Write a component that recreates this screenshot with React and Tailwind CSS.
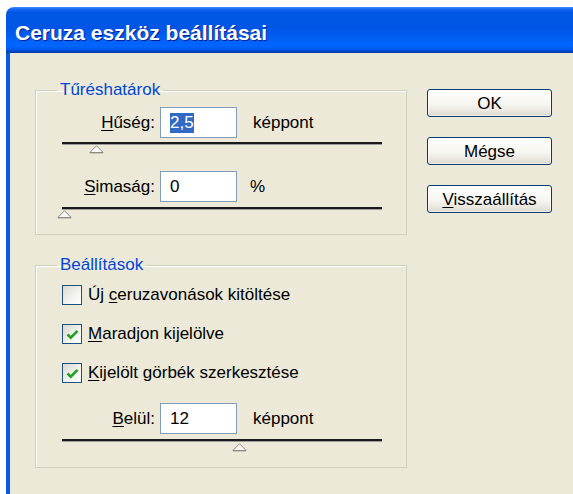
import React from "react";

// Accelerator letter, underlined like a Win32 mnemonic
const Acc = ({ children }) => (
  <span className="underline decoration-1 underline-offset-[2px]">{children}</span>
);

const Thumb = () => (
  <svg width="15" height="9" viewBox="0 0 15 9" className="block">
    <polygon points="7.5,0.8 14.2,7.5 0.8,7.5" fill="#F7F6F1" stroke="#8E8C82" strokeWidth="1" />
    <line x1="1" y1="8.5" x2="14" y2="8.5" stroke="#C9C6BA" strokeWidth="1" />
  </svg>
);

// Trackbar without ticks; `at` is the thumb offset along the track
const Track = ({ at, gap = 0 }) => (
  <div className="ml-[26px] w-[320px]">
    <div className="h-[3px] border-t-2 border-[#1A1A1A] bg-[#9C9C9C]" />
    <div style={{ marginLeft: at, marginTop: gap }} className="w-[15px]">
      <Thumb />
    </div>
  </div>
);

const ValueRow = ({ label, value, selected, unit, unitGap }) => (
  <div className="flex h-[31px] items-center">
    <div className="w-[124px] pr-[5px] text-right">{label}</div>
    <div className="flex h-[31px] w-[77px] items-center border border-[#7F9DB9] bg-white pl-[9px]">
      {selected ? (
        <span className="bg-[#316AC5] leading-[20px] text-white">{value}</span>
      ) : (
        value
      )}
    </div>
    <span className={unitGap}>{unit}</span>
  </div>
);

const CheckBox = ({ checked, children, className }) => (
  <div className={`ml-[26px] flex h-[20px] items-center ${className}`}>
    <span className="flex h-[20px] w-[20px] items-center justify-center border border-[#1C5180] bg-[linear-gradient(135deg,#D9D8D1_0%,#F4F4F0_60%,#FFFFFF_100%)]">
      {checked && (
        <svg width="13" height="11" viewBox="0 0 13 11">
          <path d="M1.5 5.5 L4.8 8.6 L11.5 1.8" fill="none" stroke="#21A121" strokeWidth="2.6" />
        </svg>
      )}
    </span>
    <span className="ml-[6px]">{children}</span>
  </div>
);

const XpButton = ({ children }) => (
  <button className="h-[28px] w-[125px] rounded-[3px] border border-[#003C74] bg-[linear-gradient(180deg,#FFFFFF_0%,#F6F5F0_55%,#E6E3D9_88%,#D6D0C5_100%)] text-[17px] leading-none text-black shadow-[inset_0_0_0_1px_rgba(255,255,255,0.6)]">
    {children}
  </button>
);

const GroupBox = ({ title, className, children }) => (
  <fieldset className={`w-[372px] border border-[#D0D0BF] shadow-[inset_1px_1px_0_#FFFFFF] ${className}`}>
    <legend className="ml-[21px] px-[3px] leading-[20px] text-[#0046D5]">{title}</legend>
    {children}
  </fieldset>
);

export default function App() {
  return (
    <div className="h-[494px] w-[573px] overflow-hidden bg-white pl-[6px] pt-[7px] font-['Liberation_Sans',Arial,sans-serif] text-[17px] text-black">
      <div className="w-[640px] overflow-hidden rounded-tl-[8px]">
        {/* caption */}
        <div className="h-[46px] bg-[linear-gradient(180deg,#3D8EFF_0%,#1266F0_5%,#0057E6_12%,#0055E4_45%,#0061F6_72%,#0066FF_84%,#005BEE_92%,#0043C6_97%,#0039A8_100%)] pl-[9px] pt-[14px]">
          <span className="text-[21px] font-bold leading-[24px] text-white [text-shadow:1px_1px_0_#0A1E8C]">
            Ceruza eszköz beállításai
          </span>
        </div>

        {/* client area */}
        <div className="flex h-[460px] border-l-4 border-[#0A58E6] bg-[#ECE9D8] pl-[25px]">
          <div className="pt-[27px]">
            <GroupBox title="Tűréshatárok" className="h-[155px]">
              <div className="mt-[7px]">
                <ValueRow
                  label={<><Acc>H</Acc>űség:</>}
                  value="2,5"
                  selected
                  unit="képpont"
                  unitGap="ml-[16px]"
                />
              </div>
              <div className="mt-[4px]">
                <Track at={27} />
              </div>
              <div className="mt-[17px]">
                <ValueRow
                  label={<><Acc>S</Acc>imaság:</>}
                  value="0"
                  unit="%"
                  unitGap="ml-[13px]"
                />
              </div>
              <div className="mt-[5px]">
                <Track at={-5} />
              </div>
            </GroupBox>

            <GroupBox title="Beállítások" className="mt-[20px] h-[213px]">
              <CheckBox className="mt-[10px]">
                Új <Acc>c</Acc>eruzavonások kitöltése
              </CheckBox>
              <CheckBox checked className="mt-[19px]">
                <Acc>M</Acc>aradjon kijelölve
              </CheckBox>
              <CheckBox checked className="mt-[19px]">
                <Acc>K</Acc>ijelölt görbék szerkesztése
              </CheckBox>
              <div className="mt-[20px]">
                <ValueRow
                  label={<><Acc>B</Acc>elül:</>}
                  value="12"
                  unit="képpont"
                  unitGap="ml-[16px]"
                />
              </div>
              <div className="mt-[5px]">
                <Track at={170} gap={1} />
              </div>
            </GroupBox>
          </div>

          <div className="ml-[20px] flex flex-col gap-[20px] pt-[36px]">
            <XpButton>OK</XpButton>
            <XpButton>Mégse</XpButton>
            <XpButton>
              <Acc>V</Acc>isszaállítás
            </XpButton>
          </div>
        </div>
      </div>
    </div>
  );
}
